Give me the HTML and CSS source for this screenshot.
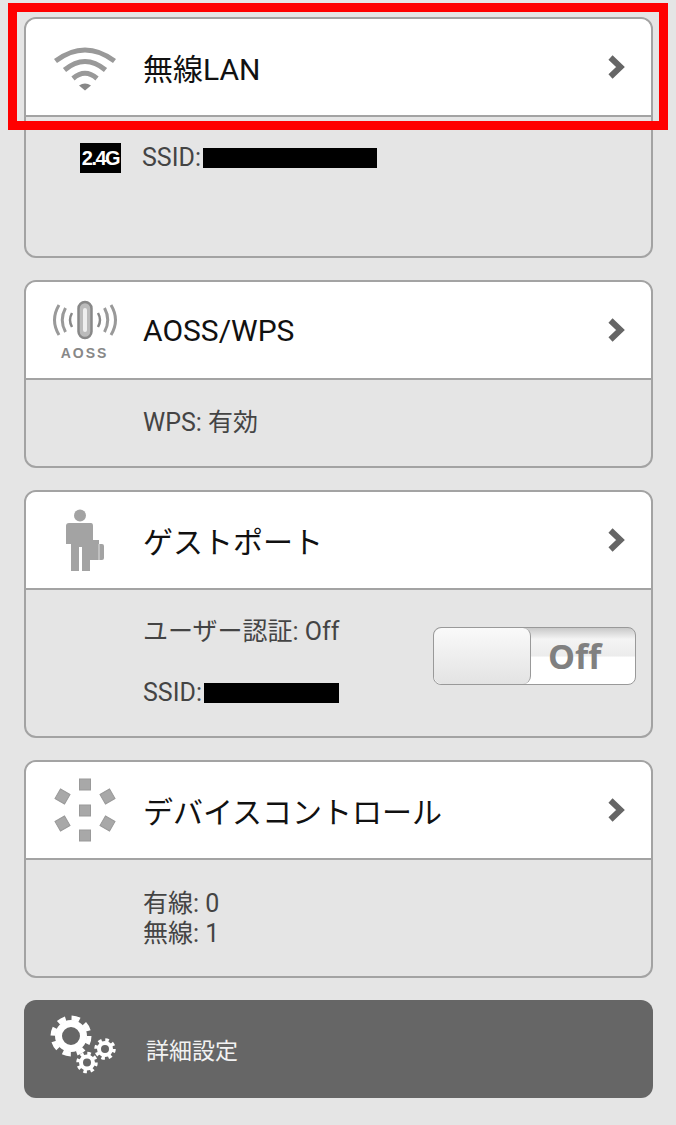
FILE: index.html
```html
<!DOCTYPE html>
<html lang="ja">
<head>
    <meta charset="UTF-8">
    <meta name="viewport" content="width=device-width, initial-scale=1.0">
    <title>AirStation</title>
    <link rel="stylesheet" href="styles.css">
</head>
<body>
    <main class="menu">
        <section class="card card-wifi">
            <div class="card-head">
                <div class="head-icon">
                    <svg width="66" height="50" viewBox="0 0 66 50">
                        <g fill="none" stroke="#999" stroke-width="5">
                            <path d="M3.5 19 Q33 -3 62.500 19"/>
                            <path d="M12.500 28 Q33 11 53.500 28"/>
                            <path d="M21 36.500 Q33 26 45 36.500"/>
                        </g>
                        <path d="M27 43.500 Q33 39.500 39 43.500 L33 48.500 Z" fill="#888"/>
                    </svg>
                </div>
                <h2>無線LAN</h2>
                <svg class="chevron" width="18" height="26" viewBox="0 0 18 26"><path d="M3.500 3.500 L13.500 13 L3.500 22.500" fill="none" stroke="#666" stroke-width="6"/></svg>
            </div>
            <div class="card-body">
                <div class="ssid-row">
                    <span class="band">2.4G</span>
                    <span class="info">SSID:</span><span class="redacted redacted-long"></span>
                </div>
            </div>
        </section>

        <section class="card card-aoss">
            <div class="card-head">
                <div class="head-icon aoss-icon">
                    <svg width="66" height="42" viewBox="0 0 66 42">
                        <rect x="26.500" y="2" width="13" height="36" rx="6.500" fill="#bbb" stroke="#888" stroke-width="2.500"/>
                        <rect x="31" y="8" width="4" height="24" rx="2" fill="#eee"/>
                        <g fill="none" stroke="#888" stroke-width="2.500">
                            <path d="M20 13 Q16 20 20 27"/>
                            <path d="M46 13 Q50 20 46 27"/>
                        </g>
                        <g fill="none" stroke="#999" stroke-width="3">
                            <path d="M13.500 8 Q7 20 13.500 32"/>
                            <path d="M52.500 8 Q59 20 52.500 32"/>
                            <path d="M7 5 Q-2 20 7 35"/>
                            <path d="M59 5 Q68 20 59 35"/>
                        </g>
                    </svg>
                    <span class="aoss-label">AOSS</span>
                </div>
                <h2>AOSS/WPS</h2>
                <svg class="chevron" width="18" height="26" viewBox="0 0 18 26"><path d="M3.500 3.500 L13.500 13 L3.500 22.500" fill="none" stroke="#666" stroke-width="6"/></svg>
            </div>
            <div class="card-body">
                <p class="info">WPS: 有効</p>
            </div>
        </section>

        <section class="card card-guest">
            <div class="card-head">
                <div class="head-icon">
                    <svg width="40" height="66" viewBox="0 0 40 66">
                        <g fill="#a3a3a3">
                            <circle cx="15" cy="8.500" r="6"/>
                            <path d="M4 16 H26 Q28 16 28 19 V37 H25 V64 H17 V40 H14 V64 H6 V37 H1 V19 Q1 16 4 16 Z"/>
                            <path d="M24 37 H28 V33 H34 V37 H37 Q39 37 39 39 V51 Q39 53 37 53 H24 Z"/>
                        </g>
                        <path d="M34 37 V53" stroke="#ddd" stroke-width="1"/>
                    </svg>
                </div>
                <h2>ゲストポート</h2>
                <svg class="chevron" width="18" height="26" viewBox="0 0 18 26"><path d="M3.500 3.500 L13.500 13 L3.500 22.500" fill="none" stroke="#666" stroke-width="6"/></svg>
            </div>
            <div class="card-body guest-body">
                <div class="guest-info">
                    <p class="info">ユーザー認証: Off</p>
                    <div class="ssid-row guest-ssid">
                        <span class="info">SSID:</span><span class="redacted redacted-short"></span>
                    </div>
                </div>
                <div class="toggle">
                    <div class="toggle-knob"></div>
                    <span class="toggle-text">Off</span>
                </div>
            </div>
        </section>

        <section class="card card-device">
            <div class="card-head">
                <div class="head-icon">
                    <svg width="62" height="64" viewBox="0 0 62 64">
                        <g fill="#a8a8a8" stroke="#999" stroke-width="1">
                            <rect x="25.500" y="1" width="11" height="11"/>
                            <rect x="25.500" y="27" width="11" height="11"/>
                            <rect x="25.500" y="52" width="11" height="11"/>
                            <rect x="3" y="13" width="11" height="11" transform="rotate(30 8.500 18.500)"/>
                            <rect x="48" y="13" width="11" height="11" transform="rotate(-30 53.500 18.500)"/>
                            <rect x="3" y="40" width="11" height="11" transform="rotate(-30 8.500 45.500)"/>
                            <rect x="48" y="40" width="11" height="11" transform="rotate(30 53.500 45.500)"/>
                        </g>
                    </svg>
                </div>
                <h2>デバイスコントロール</h2>
                <svg class="chevron" width="18" height="26" viewBox="0 0 18 26"><path d="M3.500 3.500 L13.500 13 L3.500 22.500" fill="none" stroke="#666" stroke-width="6"/></svg>
            </div>
            <div class="card-body device-body">
                <p class="info">有線: 0</p>
                <p class="info">無線: 1</p>
            </div>
        </section>

        <section class="advanced">
            <svg class="gears" width="66" height="60" viewBox="0 0 66 60">
                <g fill="none" stroke="#fff">
                    <circle cx="21" cy="21" r="12.500" stroke-width="7"/>
                    <circle cx="21" cy="21" r="18" stroke-width="5" stroke-dasharray="8.140 6"/>
                    <circle cx="37" cy="47.500" r="6" stroke-width="4"/>
                    <circle cx="37" cy="47.500" r="9" stroke-width="3.500" stroke-dasharray="3.500 3.570"/>
                    <circle cx="55" cy="34" r="6" stroke-width="4"/>
                    <circle cx="55" cy="34" r="9" stroke-width="3.500" stroke-dasharray="3.500 3.570"/>
                </g>
            </svg>
            <span class="advanced-label">詳細設定</span>
        </section>
    </main>

    <div class="highlight"></div>
</body>
</html>
```

FILE: styles.css
```css
* {
    margin: 0;
    padding: 0;
    box-sizing: border-box;
}

body {
    background: #e5e5e5;
    font-family: 'Roboto', 'Noto Sans CJK JP', sans-serif;
    color: #444;
    position: relative;
    height: 1125px;
    overflow: hidden;
}

.menu {
    display: flex;
    flex-direction: column;
    gap: 22px;
    padding: 17px 23px 0 24px;
}

.card {
    border: 2px solid #a3a3a3;
    border-radius: 12px;
    overflow: hidden;
}

.card-wifi { height: 241px; }
.card-aoss { height: 188px; }
.card-guest { height: 248px; }
.card-device { height: 218px; }

.card-head {
    display: flex;
    align-items: center;
    height: 98px;
    background: #fff;
    border-bottom: 2px solid #a3a3a3;
    padding-right: 26px;
}

.card-head h2 {
    flex: 1;
    font-size: 30px;
    font-weight: 400;
    color: #111;
}

.head-icon {
    display: flex;
    flex-direction: column;
    align-items: center;
    justify-content: center;
    width: 117px;
    padding-right: 0;
}

.chevron {
    flex: none;
}

.aoss-label {
    font-family: 'Liberation Sans', sans-serif;
    font-size: 14px;
    font-weight: 700;
    letter-spacing: 2px;
    color: #888;
    line-height: 16px;
    margin-top: 3px;
}

.card-body {
    padding: 28px 0 0 117px;
}

.info {
    font-size: 25px;
    line-height: 30px;
    color: #444;
}

.ssid-row {
    display: flex;
    align-items: center;
}

.card-wifi .card-body {
    padding: 26px 0 0 54px;
}

.band {
    width: 41px;
    height: 30px;
    margin-right: 21px;
    background: #000;
    color: #fff;
    font-family: 'Liberation Sans', sans-serif;
    font-size: 20px;
    font-weight: 700;
    letter-spacing: -1.500px;
    line-height: 30px;
    text-align: center;
}

.redacted {
    display: block;
    height: 20px;
    background: #000;
    margin-left: 2px;
}

.redacted-long { width: 174px; }
.redacted-short { width: 135px; }

.guest-body {
    display: flex;
    justify-content: space-between;
    padding: 27px 15px 0 117px;
}

.guest-ssid {
    margin-top: 31px;
}

.toggle {
    display: flex;
    align-items: center;
    width: 203px;
    height: 58px;
    margin-top: 10px;
    border: 1px solid #999;
    border-radius: 8px;
    background: linear-gradient(#c9c9c9 0, #f4f4f4 20%, #ececec 50%, #fff 52%, #fff 100%);
    overflow: hidden;
}

.toggle-knob {
    width: 97px;
    height: 100%;
    border-right: 1px solid #999;
    border-radius: 8px;
    background: linear-gradient(#fafafa, #e3e3e3);
}

.toggle-text {
    margin-left: 17px;
    font-family: 'Open Sans', sans-serif;
    font-size: 34px;
    font-weight: 700;
    color: #808080;
    line-height: 1;
}

.device-body {
    padding-top: 29px;
}

.advanced {
    display: flex;
    align-items: center;
    height: 98px;
    background: #666;
    border-radius: 12px;
}

.gears {
    margin-left: 26px;
    margin-top: -8px;
}

.advanced-label {
    margin-left: 30px;
    font-size: 23px;
    color: #f2f2f2;
}

.highlight {
    position: absolute;
    left: 8px;
    top: 3px;
    width: 660px;
    height: 127px;
    border: 9px solid #f00;
}
```
